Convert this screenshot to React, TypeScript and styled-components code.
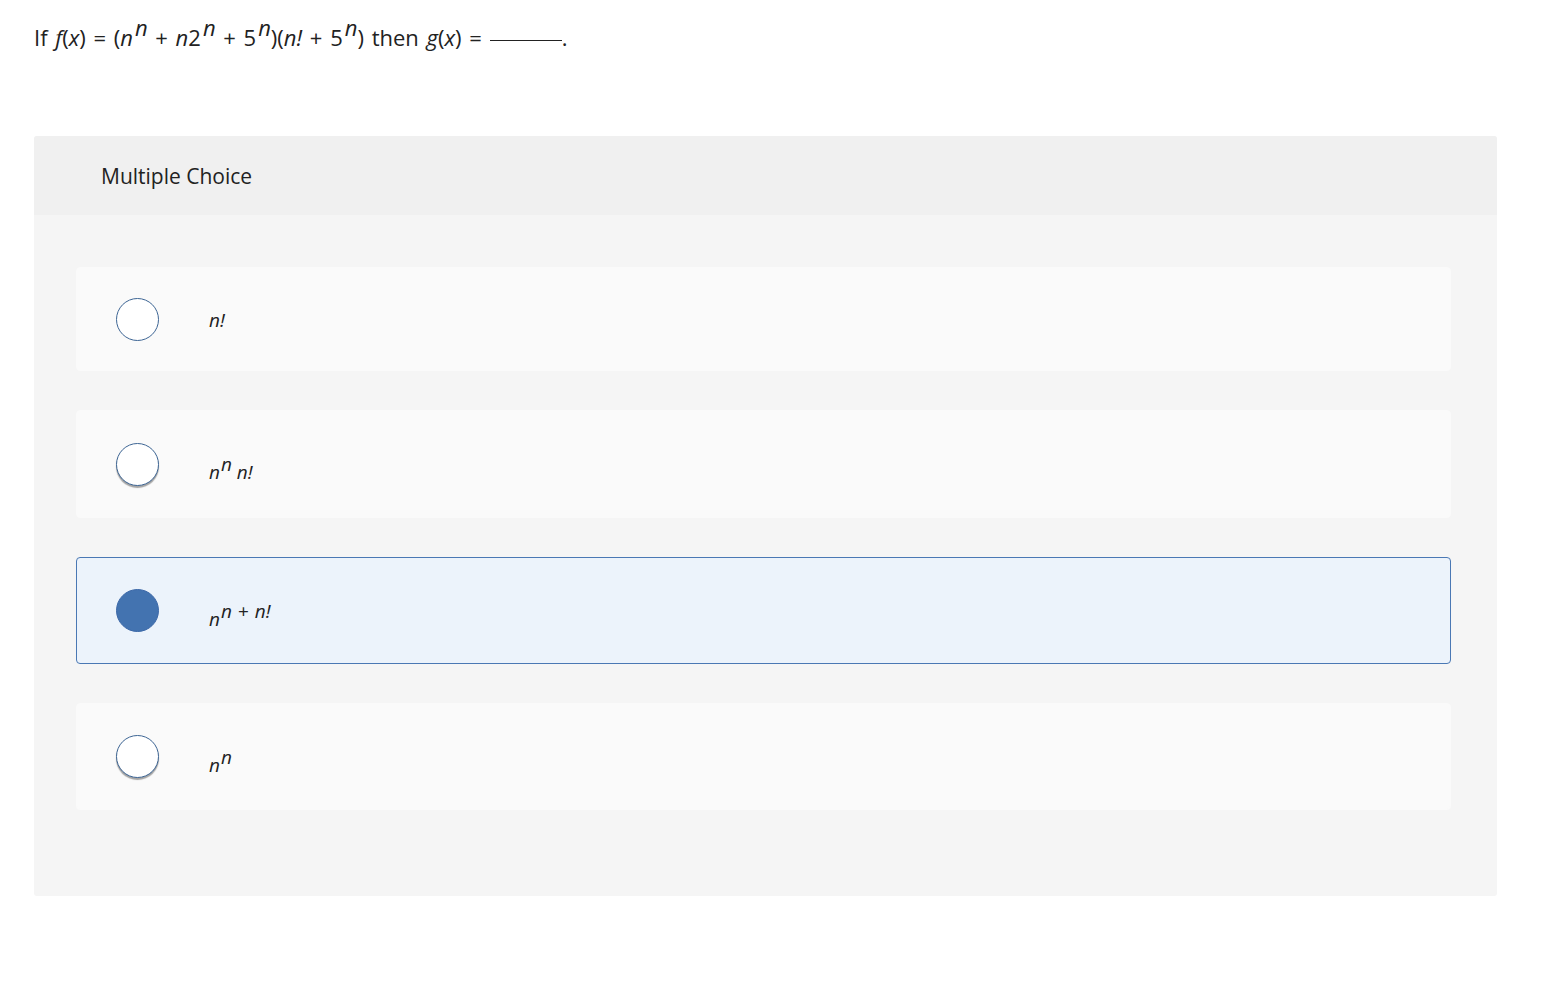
import React, {useState} from "react";
import styled, {createGlobalStyle} from "styled-components";

const GlobalStyle = createGlobalStyle`
  body {
    margin: 0;
    background: #ffffff;
    font-family: "Open Sans", Lato, "Liberation Sans", sans-serif;
    color: #222222;
  }
`;

const Page = styled.div`
  padding: 22px 51px 0 34px;
`;

const Question = styled.div`
  font-size: 22px;
  line-height: 30px;
  height: 30px;
  white-space: nowrap;
  word-spacing: 2px;
`;

const Var = styled.i`
  font-style: italic;
`;

const Sup = styled.sup`
  font-style: italic;
  font-size: 22px;
  line-height: 0;
  vertical-align: 10px;
  margin-left: 2px;
`;

const Blank = styled.span`
  display: inline-block;
  width: 72px;
  border-bottom: 1px solid #222;
  margin-left: 8px;
  transform: translateY(-5px);
`;

const Panel = styled.div`
  margin-top: 84px;
  background: #f5f5f5;
  border-radius: 3px;
  overflow: hidden;
  width: 1463px;
`;

const PanelHeader = styled.div`
  background: #f0f0f0;
  height: 79px;
  display: flex;
  align-items: center;
  padding-left: 67px;
  font-size: 21px;
  color: #222;
`;

const Choices = styled.div`
  display: flex;
  flex-direction: column;
  gap: 39px;
  padding: 52px 46px 86px 42px;
`;

const Choice = styled.label<{$selected: boolean; $h: number}>`
  display: flex;
  align-items: center;
  height: ${(p) => p.$h}px;
  box-sizing: border-box;
  padding-left: 39px;
  background: ${(p) => (p.$selected ? "#ecf3fb" : "#fafafa")};
  border: 1px solid ${(p) => (p.$selected ? "#4a78b4" : "#fafafa")};
  border-radius: 4px;
  cursor: pointer;
`;

const Radio = styled.span<{$selected: boolean; $shadow: boolean}>`
  width: 43px;
  height: 43px;
  box-sizing: border-box;
  border-radius: 50%;
  border: 1px solid ${(p) => (p.$selected ? "#3c68a8" : "#3d6594")};
  background: ${(p) => (p.$selected ? "#4373b0" : "#ffffff")};
  box-shadow: ${(p) => (p.$shadow ? "0 2px 1px rgba(0,0,0,0.35)" : "none")};
  flex-shrink: 0;
`;

const ChoiceText = styled.span<{$dy: number}>`
  margin-left: 50px;
  font-size: 19px;
  font-style: italic;
  position: relative;
  top: ${(p) => p.$dy}px;
`;

const ChoiceSup = styled.sup`
  font-size: 19px;
  line-height: 0;
  vertical-align: 8px;
  margin-left: 1px;
`;

const Plain = styled.span`
  font-style: normal;
  margin: 0 6px;
`;

export default function App() {
  const [selected, setSelected] = useState(2);

  const choices = [
    {h: 104, dy: 1, content: <>n!</>},
    {h: 108, dy: 8, content: <>n<ChoiceSup>n</ChoiceSup> n!</>},
    {h: 107, dy: 8, content: <>n<ChoiceSup>n<Plain>+</Plain>n!</ChoiceSup></>},
    {h: 107, dy: 8, content: <>n<ChoiceSup>n</ChoiceSup></>},
  ];

  return (
    <Page>
      <GlobalStyle />
      <Question>
        If <Var>f</Var>(<Var>x</Var>) = (<Var>n</Var>
        <Sup>n</Sup> + <Var>n</Var>2<Sup>n</Sup> + 5<Sup>n</Sup>)(<Var>n!</Var> + 5<Sup>n</Sup>) then{" "}
        <Var>g</Var>(<Var>x</Var>) =<Blank />.
      </Question>
      <Panel>
        <PanelHeader>Multiple Choice</PanelHeader>
        <Choices>
          {choices.map((c, i) => (
            <Choice key={i} $selected={selected === i} $h={c.h} onClick={() => setSelected(i)}>
              <Radio $selected={selected === i} $shadow={i === 1 || i === 3} />
              <ChoiceText $dy={c.dy}>{c.content}</ChoiceText>
            </Choice>
          ))}
        </Choices>
      </Panel>
    </Page>
  );
}
